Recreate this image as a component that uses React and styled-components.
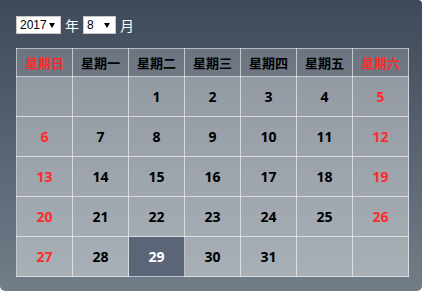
import React from "react";
import styled, { createGlobalStyle } from "styled-components";

const Global = createGlobalStyle`
  html, body { margin: 0; padding: 0; background: #fff; }
`;

const Panel = styled.div`
  box-sizing: border-box;
  width: 422px;
  height: 291px;
  padding: 16px 14px 14px 16px;
  border-radius: 0 4px 5px 5px;
  background: linear-gradient(180deg, #3e4959 0%, #56616f 45%, #717d89 100%);
  font-family: "Noto Sans CJK SC", "Open Sans", sans-serif;
`;

const Toolbar = styled.div`
  display: flex;
  align-items: center;
  gap: 3px;
  height: 18px;
  margin-bottom: 14px;
`;

const SelectWrap = styled.span`
  position: relative;
  display: flex;
  width: ${(p) => p.$w}px;
  height: 18px;
  &::after {
    content: "";
    position: absolute;
    right: 6px;
    top: 7px;
    border-left: 3px solid transparent;
    border-right: 3px solid transparent;
    border-top: 5px solid #000;
    pointer-events: none;
  }
`;

const Select = styled.select`
  appearance: none;
  -webkit-appearance: none;
  box-sizing: border-box;
  display: block;
  width: 100%;
  height: 18px;
  margin: 0;
  padding: 0 0 0 3px;
  border: 1px solid #c8c8c8;
  border-radius: 0;
  background: #fff;
  color: #000;
  font-family: "Liberation Sans", Arial, sans-serif;
  font-size: 12px;
  line-height: 16px;
  outline: none;
`;

const Label = styled.span`
  color: #fff;
  font-size: 14px;
  line-height: 18px;
  padding: 0 1px;
`;

const Table = styled.table`
  border-collapse: collapse;
  table-layout: fixed;
  width: 393px;
`;

const Head = styled.th`
  height: 27px;
  padding: 0;
  width: 55px;
  border: 1px solid rgba(255, 255, 255, 0.6);
  background: rgba(255, 255, 255, 0.2);
  color: ${(p) => (p.$weekend ? "#ff2a2a" : "#000")};
  font-family: "Noto Sans CJK SC", sans-serif;
  font-size: 13px;
  font-weight: 700;
  text-align: center;
`;

const Cell = styled.td`
  height: 39px;
  padding: 0;
  border: 1px solid rgba(255, 255, 255, 0.6);
  background: ${(p) => (p.$active ? "#5a6677" : "rgba(255, 255, 255, 0.4)")};
  color: ${(p) => (p.$active ? "#fff" : p.$weekend ? "#ff2a2a" : "#000")};
  font-family: "Open Sans", "Noto Sans", sans-serif;
  font-size: 14px;
  font-weight: 700;
  text-align: center;
`;

const days = ["星期日", "星期一", "星期二", "星期三", "星期四", "星期五", "星期六"];

function buildWeeks() {
  const cells = [null, null];
  for (let d = 1; d <= 31; d++) cells.push(d);
  while (cells.length % 7) cells.push(null);
  const weeks = [];
  for (let i = 0; i < cells.length; i += 7) weeks.push(cells.slice(i, i + 7));
  return weeks;
}

export default function App() {
  const weeks = buildWeeks();
  return (
    <>
      <Global />
      <Panel>
        <Toolbar>
          <SelectWrap $w={45}>
            <Select defaultValue="2017">
              <option>2016</option>
              <option>2017</option>
              <option>2018</option>
            </Select>
          </SelectWrap>
          <Label>年</Label>
          <SelectWrap $w={33}>
            <Select defaultValue="8">
              {Array.from({ length: 12 }, (_, i) => (
                <option key={i}>{i + 1}</option>
              ))}
            </Select>
          </SelectWrap>
          <Label>月</Label>
        </Toolbar>
        <Table>
          <thead>
            <tr>
              {days.map((d, i) => (
                <Head key={d} $weekend={i === 0 || i === 6}>
                  {d}
                </Head>
              ))}
            </tr>
          </thead>
          <tbody>
            {weeks.map((w, wi) => (
              <tr key={wi}>
                {w.map((d, i) => (
                  <Cell key={i} $weekend={i === 0 || i === 6} $active={d === 29}>
                    {d ?? ""}
                  </Cell>
                ))}
              </tr>
            ))}
          </tbody>
        </Table>
      </Panel>
    </>
  );
}
